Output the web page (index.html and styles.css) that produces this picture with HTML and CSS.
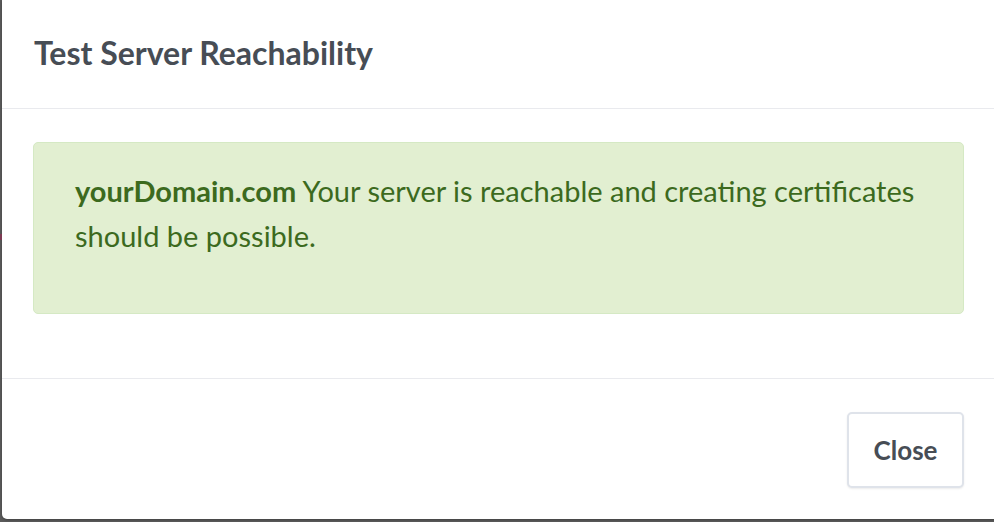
FILE: index.html
```html
<!DOCTYPE html>
<html lang="en">
<head>
<meta charset="utf-8">
<title>Test Server Reachability</title>
<link rel="stylesheet" href="styles.css">
</head>
<body>
<div class="backdrop">
  <span class="behind-mark"></span>
  <div class="modal">
    <div class="modal-header">
      <h5 class="modal-title">Test Server Reachability</h5>
    </div>
    <div class="modal-body">
      <div class="alert">
        <p><strong>yourDomain.com</strong> Your server is reachable and creating certificates should be possible.</p>
      </div>
    </div>
    <div class="modal-footer">
      <button class="btn" type="button">Close</button>
    </div>
  </div>
</div>
</body>
</html>
```

FILE: styles.css
```css
html, body {
  margin: 0;
  padding: 0;
  height: 100%;
  overflow: hidden;
}

body {
  background: #5b5b5b;
  font-family: "Lato", "Open Sans", "Noto Sans", sans-serif;
}

.backdrop {
  position: relative;
  height: 100%;
}

.behind-mark {
  position: absolute;
  left: 0;
  top: 234px;
  width: 2px;
  height: 6px;
  background: #7c3a52;
}

.modal {
  margin-left: 2px;
  width: 993px;
  height: 519px;
  background: #fff;
  border-radius: 0 0 0 5px;
  display: flex;
  flex-direction: column;
  box-shadow: 0 1px 3px rgba(0, 0, 0, 0.3);
}

.modal-header {
  height: 109px;
  flex-shrink: 0;
  box-sizing: border-box;
  border-bottom: 1px solid #e9eaee;
  padding: 0 31px 2px 32px;
  display: flex;
  align-items: center;
}

.modal-title {
  margin: 0;
  font-size: 32px;
  font-weight: 700;
  color: #474d55;
  line-height: 1.2;
}

.modal-body {
  padding: 33px 31px 64px;
}

.alert {
  height: 172px;
  box-sizing: border-box;
  background: #e2efd1;
  border: 1px solid #d5e9c4;
  border-radius: 5px;
  padding: 25px 41px 0;
  color: #3c6a1e;
}

.alert p {
  margin: 0;
  font-size: 29px;
  line-height: 45px;
}

.alert strong {
  font-weight: 700;
}

.modal-footer {
  flex: 1;
  border-top: 1px solid #e9eaee;
  padding: 33px 31px 0;
  display: flex;
  justify-content: flex-end;
  align-items: flex-start;
}

.btn {
  width: 117px;
  height: 76px;
  background: #fff;
  border: 2px solid #dfe3ea;
  border-radius: 5px;
  box-shadow: 0 1px 2px rgba(0, 0, 0, 0.08);
  font-family: inherit;
  font-size: 26px;
  font-weight: 700;
  color: #474d55;
  padding: 0;
}
```
